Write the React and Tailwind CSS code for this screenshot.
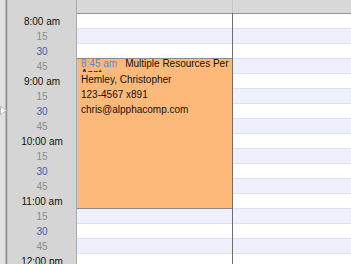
import React from "react";

const labels = [
  ["8:00 am", "h"], ["15", "q"], ["30", "b"], ["45", "q"],
  ["9:00 am", "h"], ["15", "q"], ["30", "b"], ["45", "q"],
  ["10:00 am", "h"], ["15", "q"], ["30", "b"], ["45", "q"],
  ["11:00 am", "h"], ["15", "q"], ["30", "b"], ["45", "q"],
  ["12:00 pm", "h"],
];

function Rows() {
  return (
    <>
      {labels.map((_, i) => (
        <div
          key={i}
          className={
            "h-[15px] shrink-0 border-b border-[#dfe2ea] " +
            (i % 2 === 1 ? "bg-[#eef1fb]" : "bg-white")
          }
        />
      ))}
    </>
  );
}

export default function App() {
  return (
    <div className="relative w-[351px] h-[264px] overflow-hidden flex bg-white font-['Liberation_Sans',Arial,sans-serif] text-[10px]">
      {/* left strip */}
      <div className="w-[5px] shrink-0 bg-[#e1e1e1]" />
      <div className="w-px shrink-0 bg-[#b4b4b4]" />
      <div className="w-px shrink-0 bg-[#8e8e8e]" />
      <div className="w-px shrink-0 bg-[#c4c4c4]" />

      {/* time column */}
      <div className="w-[68px] shrink-0 flex flex-col bg-[#d5d5d5]">
        <div className="h-[14px] shrink-0" />
        {labels.map(([t, k], i) => (
          <div
            key={i}
            className={
              "h-[15px] shrink-0 flex items-center justify-center leading-none " +
              (k === "h"
                ? "text-[#111111]"
                : k === "b"
                ? "text-[#2f67ad]"
                : "text-[#8c8c8c]")
            }
          >
            {t}
          </div>
        ))}
      </div>
      <div className="w-px shrink-0 bg-[#a9a9a9]" />

      {/* day column */}
      <div className="relative w-[155px] shrink-0 flex flex-col">
        <div className="h-[14px] shrink-0 bg-[#d8d8d8] border-b border-[#939393]" />
        <Rows />
        <div className="absolute left-0 right-0 top-[58px] h-[151px] bg-[#fdb97a] border-y border-[#8a8a8a] pl-[4px] pr-[1px] text-[#111111]">
          <div className="h-[13px] overflow-hidden leading-[10px]">
            <span className="text-[#5d83c9] mr-[8px]">8:45 am</span>
            Multiple Resources Per Appt
          </div>
          <div className="leading-[15px]">Hemley, Christopher</div>
          <div className="leading-[15px]">123-4567 x891</div>
          <div className="leading-[15px]">chris@alpphacomp.com</div>
        </div>
      </div>

      {/* separator */}
      <div className="w-px shrink-0 flex flex-col">
        <div className="h-[13px] bg-[#c6c6c6]" />
        <div className="flex-1 bg-[#6e6e6e]" />
      </div>

      {/* right column */}
      <div className="flex-1 flex flex-col">
        <div className="h-[14px] shrink-0 bg-[#d8d8d8] border-b border-[#939393]" />
        <Rows />
      </div>

      {/* small arrow on the left strip */}
      <svg className="absolute left-0 top-[106px]" width="8" height="9" viewBox="0 0 8 9">
        <polygon points="0.5,0.5 6.5,4.5 0.5,8.5" fill="#ffffff" stroke="#a8a8a8" strokeWidth="0.8" />
      </svg>
    </div>
  );
}
